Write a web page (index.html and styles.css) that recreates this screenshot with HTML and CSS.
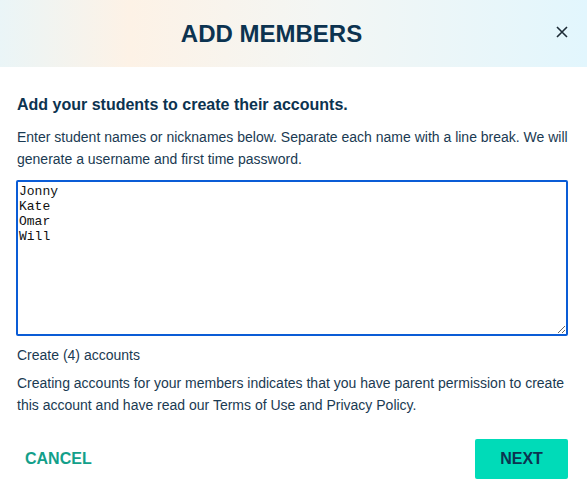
FILE: index.html
```html
<!DOCTYPE html>
<html>
<head>
<meta charset="utf-8">
<link rel="stylesheet" href="styles.css">
</head>
<body>
<div class="modal">
  <header class="modal-header">
    <h1 class="title">ADD MEMBERS</h1>
    <button class="close" aria-label="Close">
      <svg width="12" height="12" viewBox="0 0 12 12"><path d="M1 1L11 11M11 1L1 11" stroke="#1d2b36" stroke-width="1.6" fill="none"/></svg>
    </button>
  </header>
  <main class="modal-body">
    <h2 class="subtitle">Add your students to create their accounts.</h2>
    <p class="text">Enter student names or nicknames below. Separate each name with a line break. We will generate a username and first time password.</p>
    <textarea class="names">Jonny
Kate
Omar
Will</textarea>
    <p class="count">Create (4) accounts</p>
    <p class="text">Creating accounts for your members indicates that you have parent permission to create this account and have read our Terms of Use and Privacy Policy.</p>
  </main>
  <footer class="modal-footer">
    <button class="btn-cancel">CANCEL</button>
    <button class="btn-next">NEXT</button>
  </footer>
</div>
</body>
</html>
```
FILE: styles.css
```css
* { box-sizing: border-box; }
html, body { margin: 0; padding: 0; background: #fff; }
body {
  font-family: "Liberation Sans", Arial, sans-serif;
  color: #0e3450;
  width: 587px;
  height: 494px;
  overflow: hidden;
}
.modal-header {
  height: 67px;
  display: flex;
  align-items: center;
  justify-content: center;
  position: relative;
  background: linear-gradient(90deg, #eaf5f7 0%, #fdf2e6 22%, #f3f6f4 55%, #e2f6fd 100%);
}
.title {
  margin: 0;
  font-size: 24px;
  font-weight: bold;
  color: #0c3350;
  letter-spacing: 0;
  transform: translateX(-22px);
}
.close {
  position: absolute;
  right: 19px;
  top: 26px;
  background: none;
  border: 0;
  padding: 0;
  width: 12px;
  height: 12px;
  display: flex;
}
.modal-body {
  padding: 28px 16px 0 16px;
}
.subtitle {
  margin: 0 0 11px 1px;
  font-size: 16px;
  line-height: 20px;
  font-weight: bold;
  color: #0c3350;
}
.text {
  margin: 0 0 0 1px;
  font-size: 14px;
  line-height: 22px;
  color: #1a3a52;
}
.names {
  display: block;
  width: 552px;
  height: 156px;
  margin: 10px 0 0 0;
  border: 2px solid #0a5cd6;
  border-radius: 2px;
  outline: none;
  padding: 2px 1px;
  font-family: "Liberation Mono", "Courier New", monospace;
  font-size: 13px;
  line-height: 15px;
  color: #111;
  resize: vertical;
}
.count {
  margin: 8px 0 6px 1px;
  font-size: 14px;
  line-height: 22px;
  color: #1a3a52;
}
.modal-footer {
  display: flex;
  justify-content: space-between;
  align-items: center;
  padding: 23px 19px 0 16px;
}
.btn-cancel {
  background: none;
  border: 0;
  font-family: "Liberation Sans", Arial, sans-serif;
  font-weight: bold;
  font-size: 16px;
  color: #13a08a;
  padding: 0 9px;
  height: 40px;
}
.btn-next {
  background: #00dbb8;
  border: 0;
  border-radius: 2px;
  font-family: "Liberation Sans", Arial, sans-serif;
  font-weight: bold;
  font-size: 16px;
  color: #0c3350;
  width: 93px;
  height: 40px;
}
```
